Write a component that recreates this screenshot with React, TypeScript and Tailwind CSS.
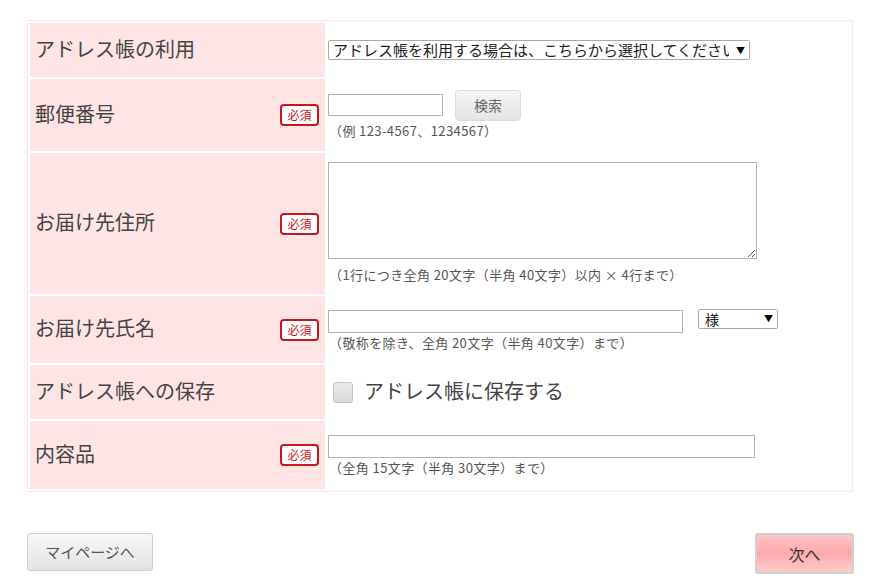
import React from 'react';

const font = { fontFamily: '"Noto Sans CJK JP", "Noto Sans", sans-serif' };

const Required: React.FC = () => (
  <span className="inline-flex h-[22px] w-[39px] items-center justify-center rounded-[4px] border-2 border-[#c8161d] bg-white text-[12px] leading-none text-[#c8161d]">
    必須
  </span>
);

interface RowProps {
  label: string;
  required?: boolean;
  height: string;
  children: React.ReactNode;
}

const Row: React.FC<RowProps> = ({ label, required, height, children }) => (
  <tr className={height}>
    <th className="w-[295px] bg-[#fee4e5] p-0 text-left align-middle font-normal">
      <div className="flex items-center justify-between pl-[5px] pr-[6px]">
        <span className="-mt-[3px] text-[20px] leading-[24px] text-[#444]">{label}</span>
        {required && <Required />}
      </div>
    </th>
    <td className="bg-white p-0 pl-[1px] align-middle">{children}</td>
  </tr>
);

const Hint: React.FC<{ children: React.ReactNode }> = ({ children }) => (
  <p className="pl-[1px] text-[13px] leading-[20px] tracking-[0.4px] text-[#555]">{children}</p>
);

// covers the clipped end of the option text, like a native select's arrow area
const Arrow: React.FC = () => (
  <span className="pointer-events-none absolute right-[1px] top-[1px] flex h-[18px] w-[20px] items-center justify-end bg-white pr-[4px] text-[9px] leading-none text-black">
    ▼
  </span>
);

export default function App() {
  return (
    <div className="min-h-[586px] w-[886px] bg-white pt-[20px] pl-[27px]" style={font}>
      <table className="w-[826px] border-separate border-spacing-[2px] border border-[#fbe6e6]">
        <tbody>
          <Row label="アドレス帳の利用" height="h-[54px]">
            <div className="relative w-[422px]">
              <select className="block h-[20px] w-full appearance-none overflow-hidden rounded-[2px] border border-[#a9a9a9] bg-white pl-[4px] pr-[16px] text-[15px] leading-[18px] text-[#222]">
                <option>アドレス帳を利用する場合は、こちらから選択してください</option>
              </select>
              <Arrow />
            </div>
          </Row>
          <Row label="郵便番号" required height="h-[72px]">
            <div className="flex items-center gap-[12px]">
              <input className="h-[22px] w-[115px] border border-[#b3b3b3] bg-white" />
              <button className="h-[31px] w-[66px] rounded-[4px] border border-[#dcdcdc] bg-gradient-to-b from-[#f6f6f6] to-[#e4e4e4] text-[14px] text-[#666]">
                検索
              </button>
            </div>
            <Hint>（例 123-4567、1234567）</Hint>
          </Row>
          <Row label="お届け先住所" required height="h-[141px]">
            <textarea className="block h-[97px] w-[429px] resize border border-[#b3b3b3] bg-white" />
            <div className="pt-[6px]">
              <Hint>（1行につき全角 20文字（半角 40文字）以内 × 4行まで）</Hint>
            </div>
          </Row>
          <Row label="お届け先氏名" required height="h-[67px]">
            <div className="flex items-start gap-[15px] pt-[2px]">
              <input className="mt-[1px] h-[23px] w-[355px] border border-[#b3b3b3] bg-white" />
              <div className="relative w-[80px]">
                <select className="block h-[20px] w-full appearance-none rounded-[2px] border border-[#a9a9a9] bg-white pl-[6px] text-[14px] leading-[18px] text-[#222]">
                  <option>様</option>
                </select>
                <Arrow />
              </div>
            </div>
            <Hint>（敬称を除き、全角 20文字（半角 40文字）まで）</Hint>
          </Row>
          <Row label="アドレス帳への保存" height="h-[54px]">
            <label className="flex items-center gap-[11px] pl-[5px]">
              <span className="h-[21px] w-[20px] rounded-[3px] border border-[#c4c4c4] bg-gradient-to-b from-[#e9e9e9] to-[#dadada]" />
              <span className="-mt-[2px] text-[20px] leading-[24px] text-[#444]">アドレス帳に保存する</span>
            </label>
          </Row>
          <Row label="内容品" required height="h-[68px]">
            <div className="pt-[2px]">
              <input className="block h-[23px] w-[427px] border border-[#b3b3b3] bg-white" />
            </div>
            <Hint>（全角 15文字（半角 30文字）まで）</Hint>
          </Row>
        </tbody>
      </table>

      <div className="mt-[41px] flex w-[827px] items-start justify-between">
        <button className="h-[38px] w-[126px] rounded-[3px] border border-[#d0d0d0] bg-gradient-to-b from-[#f8f8f8] to-[#e3e3e3] text-[15px] text-[#555]">
          マイページへ
        </button>
        <button className="h-[41px] w-[99px] rounded-[3px] border-2 border-[#cfcfcf] bg-gradient-to-b from-[#ffc2c3] via-[#ffa9ab] to-[#ffcacb] text-[16px] text-[#333]">
          次へ
        </button>
      </div>
    </div>
  );
}
